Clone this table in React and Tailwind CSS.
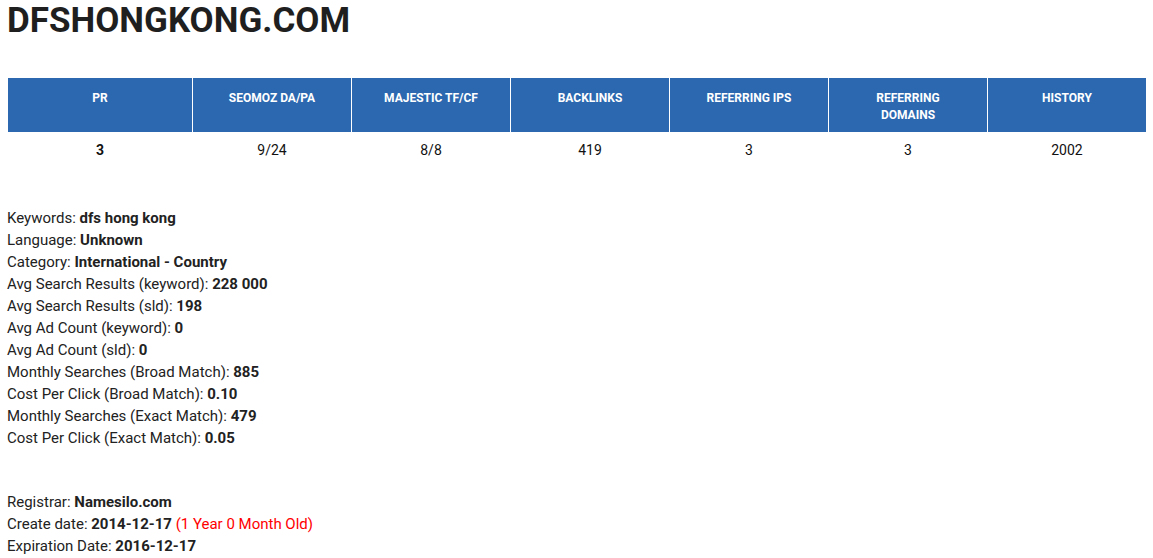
const columns = [
  { head: "PR", value: "3", bold: true },
  { head: "SEOMOZ DA/PA", value: "9/24" },
  { head: "MAJESTIC TF/CF", value: "8/8" },
  { head: "BACKLINKS", value: "419" },
  { head: "REFERRING IPS", value: "3" },
  { head: "REFERRING DOMAINS", value: "3", narrow: true },
  { head: "HISTORY", value: "2002" },
];

const keywordStats = [
  ["Keywords", "dfs hong kong"],
  ["Language", "Unknown"],
  ["Category", "International - Country"],
  ["Avg Search Results (keyword)", "228 000"],
  ["Avg Search Results (sld)", "198"],
  ["Avg Ad Count (keyword)", "0"],
  ["Avg Ad Count (sld)", "0"],
  ["Monthly Searches (Broad Match)", "885"],
  ["Cost Per Click (Broad Match)", "0.10"],
  ["Monthly Searches (Exact Match)", "479"],
  ["Cost Per Click (Exact Match)", "0.05"],
];

const Line = ({ label, value, children }) => (
  <div className="h-[22px] leading-[22px]">
    {label}: <b className="font-bold">{value}</b>
    {children}
  </div>
);

const App = () => {
  return (
    <div className="w-[1153px] h-[558px] overflow-hidden bg-white px-[7px] text-[#222222] font-['Roboto',sans-serif] text-[15px]">
      <h1 className="h-[40px] leading-[42px] text-[35px] font-bold text-[#1f1f1f]">
        DFSHONGKONG.COM
      </h1>

      {/* stats table */}
      <div className="mt-[38px] ml-px grid grid-cols-[184px_repeat(6,158px)] gap-x-px w-[1138px]">
        {columns.map((c) => (
          <div
            key={c.head}
            className="h-[54px] bg-[#2b68b0] text-white text-[12px] font-bold leading-[17px] text-center pt-[12px] flex justify-center"
          >
            <span className={c.narrow ? "w-[80px]" : ""}>{c.head}</span>
          </div>
        ))}
        {columns.map((c) => (
          <div
            key={c.head + "-v"}
            className={`h-[36px] leading-[36px] text-center text-[14px] text-[#111111] ${c.bold ? "font-bold" : ""}`}
          >
            {c.value}
          </div>
        ))}
      </div>

      <div className="mt-[39px]">
        {keywordStats.map(([l, v]) => (
          <Line key={l} label={l} value={v} />
        ))}
      </div>

      <div className="mt-[42px]">
        <Line label="Registrar" value="Namesilo.com" />
        <Line label="Create date" value="2014-12-17">
          {" "}
          <span className="text-[#ff0000]">(1 Year 0 Month Old)</span>
        </Line>
        <Line label="Expiration Date" value="2016-12-17" />
      </div>
    </div>
  );
};

export default App;
